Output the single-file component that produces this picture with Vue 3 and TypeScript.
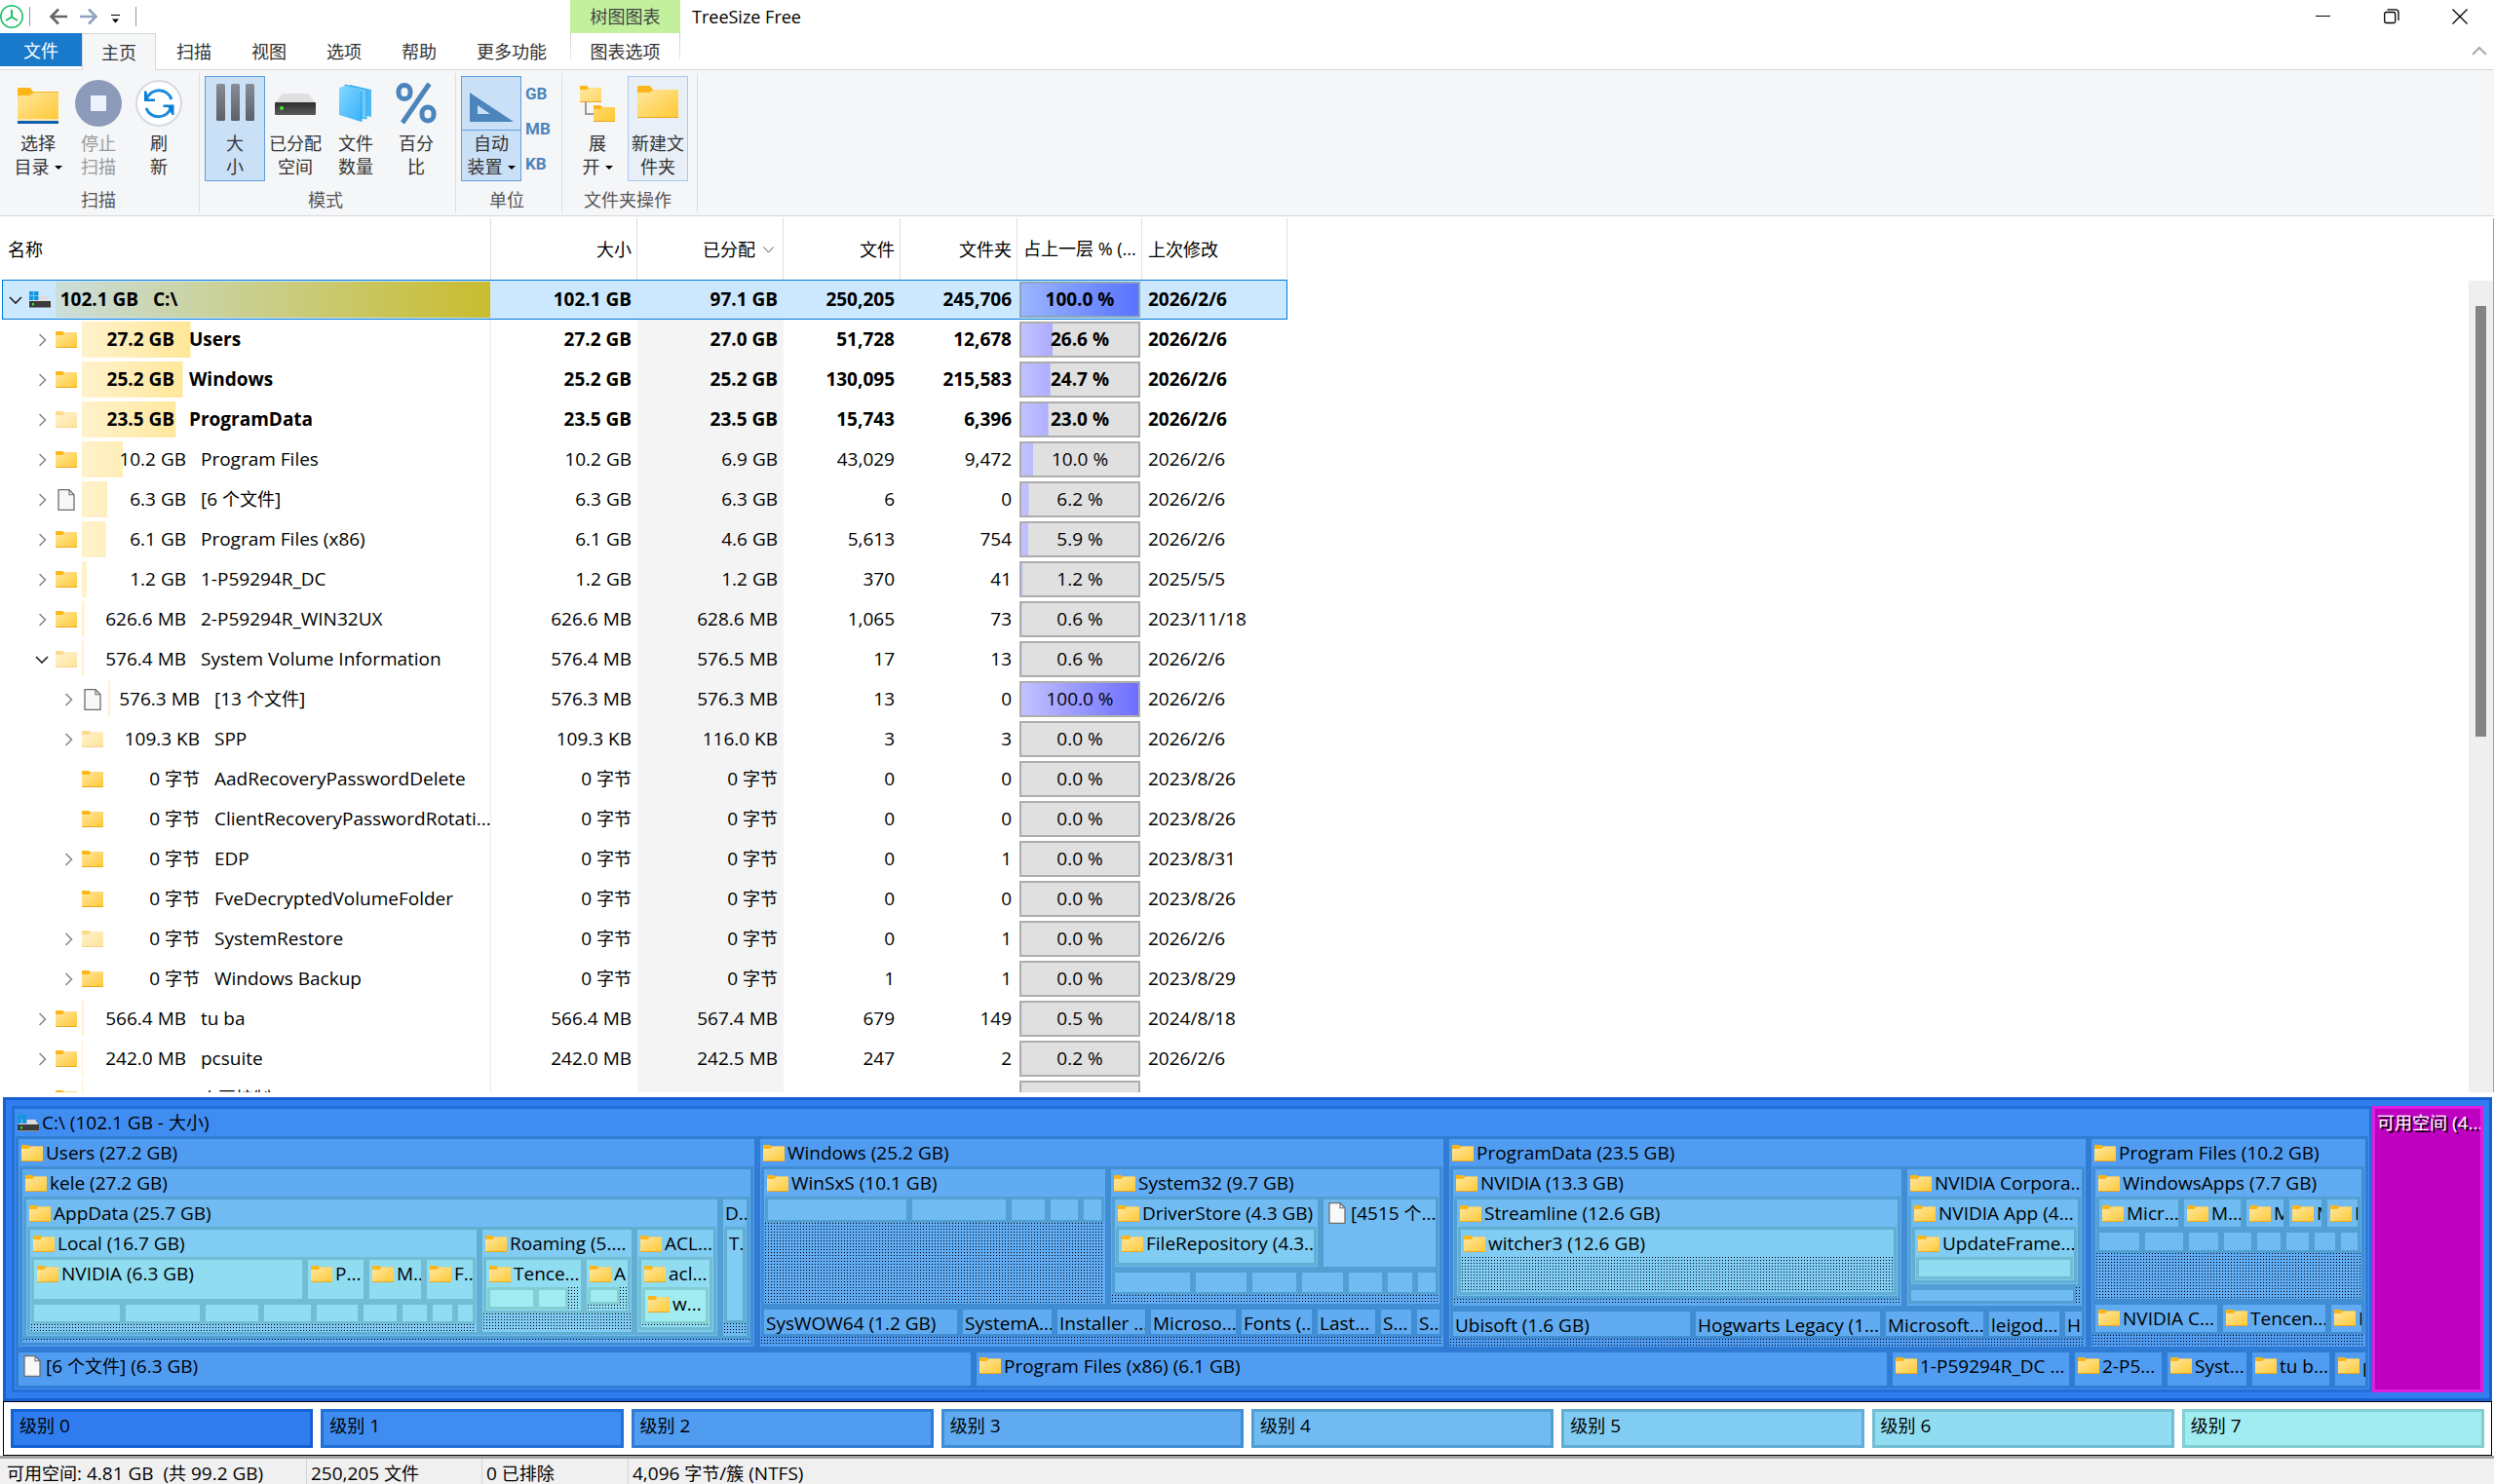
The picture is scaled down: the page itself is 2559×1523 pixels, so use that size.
<script setup lang="ts">
import { h, ref } from 'vue'

// Splits mixed text so that Chinese runs can use their own size.
const T = (props: { s: string }) =>
  h(
    'span',
    { class: 't' },
    props.s
      .split(/([\u3400-\u9fff]+)/)
      .filter((p) => p !== '')
      .map((p) => (/[\u3400-\u9fff]/.test(p) ? h('span', { class: 'zh' }, p) : p)),
  )
T.props = ['s']

type IconKind = 'folder' | 'faded' | 'file' | 'drive'

const Icon = (props: { kind: IconKind }) => {
  if (props.kind === 'file') {
    return h('svg', { class: 'ico file', viewBox: '0 0 22 22', 'aria-hidden': 'true' }, [
      h('path', { d: 'M3 .7h11l5 5v15.6H3z', fill: '#f8f8f8', stroke: '#6e6e6e', 'stroke-width': 1.3 }),
      h('path', { d: 'M14 .7v5h5', fill: 'none', stroke: '#6e6e6e', 'stroke-width': 1.1 }),
    ])
  }
  if (props.kind === 'drive') {
    return h('svg', { class: 'ico drive', viewBox: '0 0 22 17', 'aria-hidden': 'true' }, [
      h('path', { d: 'M4 5h14l4 6H0z', fill: '#dcdcdc' }),
      h('path', { d: 'M0 10h22v6.5H0z', fill: '#3b3b3b' }),
      h('path', { d: 'M0 16h22v1H0z', fill: '#8a8a8a' }),
      h('path', { d: 'M3 12h2v2.5H3z', fill: '#35e03a' }),
      h('path', { d: 'M0 0h4.4v4H0zM5 0h4.4v4H5zM0 4.6h4.4v4.4H0zM5 4.6h4.4v4.4H5z', fill: '#1396e2' }),
    ])
  }
  return h('svg', { class: ['ico', props.kind], viewBox: '0 0 22 17', 'aria-hidden': 'true' }, [
    h('path', { d: 'M0 .6Q0 0 .6 0H7l2 1.6H22V5H0z', fill: '#fcb61a' }),
    h('path', { d: 'M0 4h7.6L9.4 1.6H21.6Q22 1.6 22 2v14.4q0 .6-.6.6H.6Q0 17 0 16.4z', fill: 'url(#fold)' }),
    h('path', { d: 'M0 16h22q0 1-.6 1H.6Q0 17 0 16z', fill: '#eba71f' }),
  ])
}
Icon.props = ['kind']

/* ---------- ribbon ---------- */
const tabs = ['文件', '主页', '扫描', '视图', '选项', '帮助', '更多功能']
const activeTab = ref('主页')

/* ---------- directory table ---------- */
interface Row {
  d: number
  open?: boolean
  leaf?: boolean
  bold?: boolean
  icon: IconKind
  name: string
  size: string
  alloc: string
  files: string
  dirs: string
  pct: number
  bar: number
  date: string
}
const r = (
  d: number, mark: string, icon: IconKind, name: string, size: string, alloc: string,
  files: string, dirs: string, pct: number, bar: number, date: string,
): Row => ({
  d, icon, name, size, alloc, files, dirs, pct, bar, date,
  open: mark.includes('v'), leaf: mark.includes('-'), bold: mark.includes('b'),
})
const rows: Row[] = [
  r(0, 'vb', 'drive', 'C:\\', '102.1 GB', '97.1 GB', '250,205', '245,706', 100, 100, '2026/2/6'),
  r(1, 'b', 'folder', 'Users', '27.2 GB', '27.0 GB', '51,728', '12,678', 26.6, 26.6, '2026/2/6'),
  r(1, 'b', 'folder', 'Windows', '25.2 GB', '25.2 GB', '130,095', '215,583', 24.7, 24.7, '2026/2/6'),
  r(1, 'b', 'faded', 'ProgramData', '23.5 GB', '23.5 GB', '15,743', '6,396', 23.0, 23.0, '2026/2/6'),
  r(1, '', 'folder', 'Program Files', '10.2 GB', '6.9 GB', '43,029', '9,472', 10.0, 10.0, '2026/2/6'),
  r(1, '', 'file', '[6 个文件]', '6.3 GB', '6.3 GB', '6', '0', 6.2, 6.2, '2026/2/6'),
  r(1, '', 'folder', 'Program Files (x86)', '6.1 GB', '4.6 GB', '5,613', '754', 5.9, 5.9, '2026/2/6'),
  r(1, '', 'folder', '1-P59294R_DC', '1.2 GB', '1.2 GB', '370', '41', 1.2, 1.2, '2025/5/5'),
  r(1, '', 'folder', '2-P59294R_WIN32UX', '626.6 MB', '628.6 MB', '1,065', '73', 0.6, 0.6, '2023/11/18'),
  r(1, 'v', 'faded', 'System Volume Information', '576.4 MB', '576.5 MB', '17', '13', 0.6, 0.5, '2026/2/6'),
  r(2, '', 'file', '[13 个文件]', '576.3 MB', '576.3 MB', '13', '0', 100, 0.5, '2026/2/6'),
  r(2, '', 'faded', 'SPP', '109.3 KB', '116.0 KB', '3', '3', 0, 0, '2026/2/6'),
  r(2, '-', 'folder', 'AadRecoveryPasswordDelete', '0 字节', '0 字节', '0', '0', 0, 0, '2023/8/26'),
  r(2, '-', 'folder', 'ClientRecoveryPasswordRotati...', '0 字节', '0 字节', '0', '0', 0, 0, '2023/8/26'),
  r(2, '', 'folder', 'EDP', '0 字节', '0 字节', '0', '1', 0, 0, '2023/8/31'),
  r(2, '-', 'folder', 'FveDecryptedVolumeFolder', '0 字节', '0 字节', '0', '0', 0, 0, '2023/8/26'),
  r(2, '', 'faded', 'SystemRestore', '0 字节', '0 字节', '0', '1', 0, 0, '2026/2/6'),
  r(2, '', 'folder', 'Windows Backup', '0 字节', '0 字节', '1', '1', 0, 0, '2023/8/29'),
  r(1, '', 'folder', 'tu ba', '566.4 MB', '567.4 MB', '679', '149', 0.5, 0.5, '2024/8/18'),
  r(1, '', 'folder', 'pcsuite', '242.0 MB', '242.5 MB', '247', '2', 0.2, 0.3, '2026/2/6'),
  r(1, '', 'folder', '火豆控制', '223.8 MB', '224.6 MB', '180', '51', 0.2, 0.3, '2023/8/27'),
]

/* ---------- treemap ---------- */
interface Tile {
  w: number
  label?: string
  icon?: IconKind
  dots?: boolean
  rows?: Band[]
}
interface Band {
  h: number
  t: Tile[]
}
const box = (...ws: number[]): Tile[] => ws.map((w) => ({ w }))
const dots = (w = 1): Tile => ({ w, dots: true })
const band = (hh: number, ...t: Tile[]): Band => ({ h: hh, t })
const dir = (w: number, label: string, ...bands: Band[]): Tile => ({ w, label, icon: 'folder', rows: bands })
const txt = (w: number, label: string, ...bands: Band[]): Tile => ({ w, label, rows: bands })
const fil = (w: number, label: string): Tile => ({ w, label, icon: 'file' })

const users = dir(761, 'Users (27.2 GB)', band(183, dir(1, 'kele (27.2 GB)',
  band(145,
    dir(715, 'AppData (25.7 GB)', band(110,
      dir(464, 'Local (16.7 GB)',
        band(46, dir(281, 'NVIDIA (6.3 GB)'), dir(63, 'P...'), dir(59, 'M...'), dir(53, 'F...')),
        band(22, ...box(94, 82, 60, 54, 48, 40, 31, 26, 21)),
        band(7, dots())),
      dir(159, 'Roaming (5....',
        band(57,
          dir(103, 'Tence...', band(22, ...box(50, 33), dots(12))),
          dir(48, 'A', band(18, ...box(32), dots(7)), band(4, dots()))),
        band(18, dots())),
      dir(84, 'ACL...', band(74, dir(1, 'acl...', band(37, dir(1, 'w...')), band(2, dots()))), band(1)),
    )),
    txt(30, 'D...', band(98, txt(1, 'T.')), band(12, dots()))),
  band(3, dots()),
)))

const windows = dir(707, 'Windows (25.2 GB)',
  band(143,
    dir(356, 'WinSxS (10.1 GB)', band(27, ...box(148, 102, 40, 34, 24)), band(81, dots())),
    dir(343, 'System32 (9.7 GB)',
      band(75, dir(214, 'DriverStore (4.3 GB)', band(40, dir(1, 'FileRepository (4.3...'))), fil(121, '[4515 个...')),
      band(25, ...box(83, 58, 51, 48, 40, 31, 24)),
      band(8, dots()))),
  band(31, txt(204, 'SysWOW64 (1.2 GB)'), txt(97, 'SystemA...'), txt(96, 'Installer ...'), txt(93, 'Microso...'),
    txt(78, 'Fonts (...'), txt(65, 'Last...'), txt(37, 'S...'), txt(29, 'S...')),
  band(9, dots()))

const programData = dir(659, 'ProgramData (23.5 GB)',
  band(145,
    dir(466, 'NVIDIA (13.3 GB)',
      band(104, dir(1, 'Streamline (12.6 GB)', band(69, dir(1, 'witcher3 (12.6 GB)', band(34, dots()))))),
      band(6, dots())),
    dir(185, 'NVIDIA Corpora...',
      band(92, dir(1, 'NVIDIA App (4...', band(57, dir(1, 'UpdateFrame...', band(22, ...box(1)))))),
      band(17, ...box(172), dots(5)),
      band(1))),
  band(31, txt(249, 'Ubisoft (1.6 GB)'), txt(195, 'Hogwarts Legacy (1....'), txt(106, 'Microsoft...'), txt(78, 'leigod...'), txt(23, 'H')),
  band(7, dots()))

const programFiles = dir(287, 'Program Files (10.2 GB)',
  band(138, dir(1, 'WindowsApps (7.7 GB)',
    band(34, dir(87, 'Micr...'), dir(64, 'M...'), dir(44, 'M'), dir(39, 'M'), dir(37, 'I')),
    band(24, ...box(47, 45, 36, 34, 30, 29, 27, 23)),
    band(45, dots()))),
  band(34, dir(131, 'NVIDIA C...'), dir(111, 'Tencen...'), dir(37, 'I')),
  band(11, dots()))

const drive: Tile = {
  w: 2422,
  label: 'C:\\ (102.1 GB - 大小)',
  icon: 'drive',
  rows: [
    band(218, users, windows, programData, programFiles),
    band(40, fil(983, '[6 个文件] (6.3 GB)'), dir(940, 'Program Files (x86) (6.1 GB)'), dir(187, '1-P59294R_DC ...'),
      dir(95, '2-P5...'), dir(87, 'Syst...'), dir(85, 'tu b...'), dir(37, 'p')),
  ],
}

const tracks = (ns: number[]) => ns.map((n) => `minmax(0, ${n}fr)`).join(' ')

function renderTile(tile: Tile, level: number): any {
  if (tile.dots) return h('div', { class: ['dots', `lv${level - 1}`] })
  const kids = []
  if (tile.label) {
    kids.push(h('div', { class: ['cap', { plain: !tile.icon }] }, [
      tile.icon ? h(Icon, { kind: tile.icon }) : null,
      h(T, { s: tile.label }),
    ]))
  }
  if (tile.rows && tile.rows.length) {
    kids.push(h('div', { class: 'bands', style: { gridTemplateRows: tracks(tile.rows.map((b) => b.h)) } },
      tile.rows.map((b) => h('div', { class: 'band', style: { gridTemplateColumns: tracks(b.t.map((x) => x.w)) } },
        b.t.map((x) => renderTile(x, level + 1))))))
  }
  return h('div', { class: ['tile', `lv${level}`] }, kids)
}
const Treemap = () => renderTile(drive, 1)
</script>

<template>
  <div class="app">
    <svg class="defs" width="0" height="0" aria-hidden="true">
      <defs>
        <linearGradient id="fold" x1="0" y1="0" x2="1" y2="1"><stop offset="0" stop-color="#ffe7a0" /><stop offset="1" stop-color="#ffc935" /></linearGradient>
        <linearGradient id="gray" x1="0" y1="0" x2="0" y2="1"><stop offset="0" stop-color="#888c96" /><stop offset="1" stop-color="#5c6068" /></linearGradient>
        <linearGradient id="cyan" x1="0" y1="0" x2="1" y2="1"><stop offset="0" stop-color="#86d8ff" /><stop offset="1" stop-color="#36b0fa" /></linearGradient>
        <linearGradient id="box" x1="0" y1="0" x2="0" y2="1"><stop offset="0" stop-color="#2e2e2e" /><stop offset="1" stop-color="#5a5a5a" /></linearGradient>
      </defs>
    </svg>

    <header class="top">
      <div class="left">
        <div class="quick">
          <svg class="logo" viewBox="0 0 24 24" aria-hidden="true"><circle cx="12" cy="12" r="11.2" fill="#fff" stroke="#17bf63" stroke-width="1.5" /><path d="M12 5v8M12 12.5l-6 3.5M12 12.5l6 3.5" stroke="#17bf63" stroke-width="2" fill="none" /></svg>
          <i class="bar"></i>
          <button class="qb" aria-label="后退"><svg width="20" height="18" viewBox="0 0 20 18"><path d="M10 1.5 2.500 9l7.500 7.500M2 9h17" fill="none" stroke="#666" stroke-width="2.600" /></svg></button>
          <button class="qb" aria-label="前进"><svg width="20" height="18" viewBox="0 0 20 18"><path d="M10 1.500 17.500 9 10 16.500M18 9H1" fill="none" stroke="#8fa3c2" stroke-width="2.600" /></svg></button>
          <button class="qb small" aria-label="自定义"><svg width="9" height="9" viewBox="0 0 9 9"><path d="M0 0h9v1H0zM1 4.500h7L4.500 8.500z" /></svg></button>
          <i class="bar"></i>
        </div>
        <nav class="tabs">
          <button v-for="t in tabs" :key="t" :class="['tab', { file: t === '文件', on: t === activeTab }]" @click="activeTab = t">{{ t }}</button>
        </nav>
      </div>
      <div class="context">
        <div class="ctx-head">树图图表</div>
        <button class="tab ctx-tab">图表选项</button>
      </div>
      <h1 class="title">TreeSize Free</h1>
      <div class="win">
        <div class="wbtns">
          <button aria-label="最小化"><svg width="16" height="16" viewBox="0 0 16 16"><path d="M0 7.500h15" stroke="#000" /></svg></button>
          <button aria-label="还原"><svg width="16" height="16" viewBox="0 0 16 16" fill="none" stroke="#000" stroke-width="1.300"><rect x=".7" y="3.500" width="11" height="11" rx="1.500" /><path d="M3.500 .8h8.500q3 0 3 3V12" /></svg></button>
          <button aria-label="关闭"><svg width="16" height="16" viewBox="0 0 16 16"><path d="m.5.5 15 15M15.500.5l-15 15" stroke="#000" stroke-width="1.300" /></svg></button>
        </div>
        <button class="fold-btn" aria-label="折叠功能区"><svg width="16" height="10" viewBox="0 0 16 10"><path d="m1 9 7-7 7 7" fill="none" stroke="#aaa" stroke-width="2" /></svg></button>
      </div>
    </header>

    <section class="ribbon">
      <div class="group first">
        <div class="btns">
          <button class="big">
            <svg viewBox="0 0 48 48"><path d="M3 8h13l3 4h26v6H3z" fill="#fcb61a" /><path d="M3 18q0-2 2-2h10l5-3h25v28H3z" fill="url(#fold)" /><path d="M3 40h42v2H3z" fill="#fce9b4" /><path d="M3 42h42v3H3z" fill="#0a5fae" /></svg>
            <span>选择</span><span>目录<i class="caret"></i></span>
          </button>
          <button class="big off" disabled>
            <svg viewBox="0 0 48 48"><circle cx="24" cy="24" r="24" fill="#8b9bb9" /><rect x="16" y="16" width="16" height="16" rx="1" fill="#edf3fe" /></svg>
            <span>停止</span><span>扫描</span>
          </button>
          <button class="big">
            <svg viewBox="0 0 48 48"><circle cx="24" cy="24" r="23" fill="#fff" stroke="#d5d9e3" stroke-width="2" /><path d="M11.500 19.500A13.500 13.500 0 0 1 37 20M36.500 28.500A13.500 13.500 0 0 1 11 29" fill="none" stroke="#1a8bdc" stroke-width="3" /><path d="M9 11.500v10.500h11v-2.500h-7.500l-1-8zM39.500 36V25.500H28.500V28h5l4 8z" fill="#0a7fd6" /></svg>
            <span>刷</span><span>新</span>
          </button>
        </div>
        <div class="cap-g">扫描</div>
      </div>
      <div class="group">
        <div class="btns">
          <button class="big sel">
            <svg viewBox="0 0 48 48"><g fill="url(#gray)"><rect x="5" y="4" width="9" height="38" rx="1.500" /><rect x="20" y="4" width="9" height="38" rx="1.500" /><rect x="35" y="4" width="9" height="38" rx="1.500" /></g></svg>
            <span>大</span><span>小</span>
          </button>
          <button class="big">
            <svg viewBox="0 0 48 48"><path d="M11 14h26l8 10H3z" fill="#dfdfe1" /><rect x="3" y="23" width="42" height="13" rx="1" fill="url(#box)" /><circle cx="10" cy="29" r="2" fill="#3ee83a" /></svg>
            <span>已分配</span><span>空间</span>
          </button>
          <button class="big">
            <svg viewBox="0 0 48 48"><path d="m18 5 22 5v28l-22-5z" fill="#4db9f7" /><path d="m13 5 22 5v30l-22-5z" fill="#6accfb" stroke="#3aa8ec" /><path d="M7 8 13 6l17 5v32L7 36z" fill="url(#cyan)" /><path d="M30 12v31" stroke="#2f9fe6" /></svg>
            <span>文件</span><span>数量</span>
          </button>
          <button class="big">
            <svg viewBox="0 0 48 48" fill="none" stroke="#4c84bc" stroke-width="5"><rect x="6" y="5.500" width="12" height="14" rx="6" /><rect x="30" y="28" width="12" height="14" rx="6" /><path d="M37.500 4 10 44" /></svg>
            <span>百分</span><span>比</span>
          </button>
        </div>
        <div class="cap-g">模式</div>
      </div>
      <div class="group">
        <div class="btns">
          <button class="big sel split">
            <svg viewBox="0 0 48 48"><path d="M2 13v30h45zm8 13 13 9H10z" fill="#4c84bc" fill-rule="evenodd" /></svg>
            <span>自动</span><span>装置<i class="caret"></i></span>
          </button>
          <div class="units"><button>GB</button><button>MB</button><button>KB</button></div>
        </div>
        <div class="cap-g">单位</div>
      </div>
      <div class="group">
        <div class="btns">
          <button class="big">
            <svg viewBox="0 0 48 48"><path d="M12 22v13h9" fill="none" stroke="#9a9a9a" stroke-width="2" /><path d="M6 6h7l2 2h13v4H6zM20 26h7l2 2h13v4H20z" fill="#fcb61a" /><path d="M6 10h7l2-2h13v15H6zM20 30h7l2-2h13v15H20z" fill="url(#fold)" /><path d="M6 22h22v1H6zM20 42h22v1H20z" fill="#eba71f" /></svg>
            <span>展</span><span>开<i class="caret"></i></span>
          </button>
          <button class="big hov">
            <svg viewBox="0 0 48 48"><path d="M3 7q0-1 1-1h12l3 4h26v6H3z" fill="#fcb61a" /><path d="M3 15q0-2 2-2h10l5-3h24q1 0 1 1v27q0 1-1 1H4q-1 0-1-1z" fill="url(#fold)" /><path d="M3 38h42q0 1-1 1H4q-1 0-1-1z" fill="#eba71f" /></svg>
            <span>新建文</span><span>件夹</span>
          </button>
        </div>
        <div class="cap-g">文件夹操作</div>
      </div>
    </section>

    <main class="list">
      <div class="table-wrap">
        <table>
          <colgroup><col class="c-name" /><col class="c-wide" /><col class="c-wide" /><col class="c-num" /><col class="c-num" /><col class="c-pct" /><col class="c-date" /></colgroup>
          <thead>
            <tr>
              <th class="l">名称</th><th>大小</th>
              <th>已分配<svg class="sort" width="11" height="7" viewBox="0 0 11 7"><path d="m.5.5 5 5.500 5-5.500" fill="none" stroke="#555" /></svg></th>
              <th>文件</th><th>文件夹</th><th class="l"><T s="占上一层 % (..." /></th><th class="l">上次修改</th>
            </tr>
          </thead>
          <tbody>
            <tr v-for="row in rows" :key="row.name" :class="{ bold: row.bold, root: row.d === 0 }">
              <td class="name-td">
                <div :class="['name', 'd' + row.d]">
                  <button v-if="!row.leaf" class="exp" :aria-label="row.name">
                    <svg v-if="row.open" width="14" height="14" viewBox="0 0 14 14"><path d="m1 4 6 6 6-6" fill="none" stroke="#222" stroke-width="1.600" /></svg>
                    <svg v-else width="14" height="14" viewBox="0 0 14 14"><path d="m4.500 1 6 6-6 6" fill="none" stroke="#888" stroke-width="1.600" /></svg>
                  </button>
                  <span v-else class="exp"></span>
                  <Icon :kind="row.icon" />
                  <div class="share">
                    <div class="fill" :style="{ clipPath: `inset(0 ${100 - row.bar}% 0 0)` }"></div>
                    <span class="sz"><T :s="row.size" /></span>
                    <span class="nm"><T :s="row.name" /></span>
                  </div>
                </div>
              </td>
              <td><T :s="row.size" /></td>
              <td class="sorted"><T :s="row.alloc" /></td>
              <td>{{ row.files }}</td>
              <td>{{ row.dirs }}</td>
              <td class="pct-td">
                <div class="pct">
                  <div class="fill" :style="{ clipPath: `inset(0 ${100 - row.pct}% 0 0)` }"></div>
                  <span>{{ row.pct.toFixed(1) }} %</span>
                </div>
              </td>
              <td class="l">{{ row.date }}</td>
            </tr>
          </tbody>
        </table>
      </div>
      <div class="scroll"><div class="thumb"></div></div>
    </main>

    <section class="map">
      <Treemap />
      <div class="free"><T s="可用空间 (4..." /></div>
    </section>

    <section class="legend">
      <div v-for="n in 8" :key="n" :class="['lv' + (n - 1)]"><T :s="'级别 ' + (n - 1)" /></div>
    </section>

    <footer class="status">
      <span class="s1"><T s="可用空间: 4.81 GB  (共 99.2 GB)" /></span>
      <span class="s2"><T s="250,205 文件" /></span>
      <span class="s3"><T s="0 已排除" /></span>
      <span><T s="4,096 字节/簇 (NTFS)" /></span>
    </footer>
  </div>
</template>

<style>
body { background: #fff; }
.t { white-space: pre; }
.zh { font-size: 18px; line-height: 1; font-family: "Noto Sans CJK SC", sans-serif; font-weight: 400; }
.ico { width: 22px; height: 17px; flex: none; display: block; }
.ico.file { height: 22px; }
.ico.faded { opacity: .5; }

.lv0 { --f: #307df0; --b: #1560d2; }
.lv1 { --f: #408df2; --b: #226fd6; }
.lv2 { --f: #509cf1; --b: #307cd4; }
.lv3 { --f: #60abf1; --b: #408dd4; }
.lv4 { --f: #70bbf1; --b: #529fd3; }
.lv5 { --f: #80ccf2; --b: #62aed3; }
.lv6 { --f: #90dcf1; --b: #72bdd3; }
.lv7 { --f: #a0ecf0; --b: #82ced2; }

.tile {
  box-sizing: border-box;
  min-width: 0;
  min-height: 0;
  display: flex;
  flex-direction: column;
  overflow: hidden;
  background: var(--f);
  border: 3px solid var(--b);
}
.cap {
  height: 28px;
  flex: none;
  display: flex;
  align-items: center;
  gap: 3px;
  padding-left: 3px;
  overflow: hidden;
  line-height: 28px;
}
.cap.plain { padding-left: 2px; }
.bands { flex: 1; min-height: 0; display: grid; margin: 0 1px 1px; }
.band { display: grid; min-height: 0; }
.dots {
  background-color: var(--f);
  background-image: conic-gradient(from 270deg at 1px 1px, #001 90deg, transparent 0);
  background-size: 3px 3px;
}
</style>

<style scoped>
.app {
  height: 100vh;
  display: flex;
  flex-direction: column;
  overflow: hidden;
  font: 19px/28px "Open Sans", "Noto Sans CJK SC", sans-serif;
  color: #000;
}
button {
  border: 0;
  padding: 0;
  margin: 0;
  background: none;
  font: inherit;
  color: inherit;
}
.defs { position: absolute; }

.top { display: flex; flex: none; height: 71px; border-bottom: 1px solid #d5d8da; }
.quick { height: 34px; display: flex; align-items: center; }
.logo { width: 24px; height: 24px; margin-right: 6px; }
.bar { width: 1px; height: 20px; background: #999; }
.qb { display: flex; margin-left: 11px; }
.bar + .qb { margin-left: 19px; }
.qb.small { margin: 5px 16px 0 13px; }
.tabs { display: flex; gap: 1px; height: 38px; }
.tab {
  box-sizing: border-box;
  height: 38px;
  padding: 0 20px 2px;
  font: 400 18px/36px "Noto Sans CJK SC", sans-serif;
  color: #333;
}
.tab.file { height: 34px; padding: 0 24px; line-height: 34px; background: #1979ca; color: #fff; margin-right: -1px; }
.tab.on { padding: 0 19px 2px; border: 1px solid #d5d8da; border-bottom: 0; background: #f5f6f8; line-height: 34px; }
.context { margin-left: 4px; width: 113px; font: 400 18px/34px "Noto Sans CJK SC", sans-serif; text-align: center; }
.ctx-head { height: 34px; line-height: 32px; background: #c2f09c; color: #444; }
.ctx-tab {
  width: 113px;
  height: 28px;
  padding: 0;
  border: 1px solid;
  border-width: 0 1px;
  border-image: linear-gradient(#ccc, #eee) 1;
}
.title { margin: 0 0 0 12px; font-weight: 400; font-size: 18px; line-height: 34px; }
.win { margin-left: auto; display: flex; flex-direction: column; align-items: flex-end; }
.wbtns { display: flex; height: 34px; align-items: center; gap: 54px; padding-right: 27px; }
.wbtns button, .fold-btn { display: flex; }
.fold-btn { margin: 13px 7px 0 0; }

.ribbon {
  flex: none;
  height: 149px;
  display: flex;
  background: #f5f6f8;
  border-bottom: 1px solid #d5d8da;
  font: 400 18px/24px "Noto Sans CJK SC", sans-serif;
  color: #333;
}
.group { margin: 3px 0; padding: 3px 9px 0 5px; border-right: 1px solid #dcdee1; }
.group.first { padding: 3px 10px 0 8px; }
.btns { display: flex; height: 108px; }
.big {
  box-sizing: border-box;
  width: 62px;
  height: 108px;
  border: 1px solid transparent;
  display: flex;
  flex-direction: column;
  align-items: center;
  white-space: nowrap;
}
.big svg { width: 48px; height: 48px; margin: 3px 0 4px; }
.big.off { color: #999; }
.big.sel { background: #cae0f7; border-color: #5c9fe0; }
.big.hov { background: #e8eff7; border-color: #a6cbf3; }
.big.split { background: linear-gradient(#5c9fe0, #5c9fe0) 0 54px / 100% 1px no-repeat #cae0f7; }
.caret { display: inline-block; border: 4px solid transparent; border-top-color: #000; border-bottom: 0; margin: 0 0 4px 5px; }
.units { display: flex; flex-direction: column; justify-content: space-around; align-items: flex-start; margin-left: 4px; width: 28px; font: 700 17px/24px Roboto, sans-serif; color: #4c84bc; }
.units button { height: 24px; }
.cap-g { text-align: center; line-height: 36px; color: #555; }

.list { flex: 1; min-height: 0; display: flex; margin: 2px 0 5px; border-right: 1px solid #a0a0a0; }
.table-wrap { flex: 1; overflow: hidden; }
table { border-collapse: separate; border-spacing: 0; table-layout: fixed; width: 1319px; margin-left: 2px; }
.c-name { width: 502px; }
.c-wide { width: 150px; }
.c-num { width: 120px; }
.c-pct { width: 128px; }
.c-date { width: 149px; }
th {
  height: 61px;
  padding: 0 5px 2px 0;
  text-align: right;
  font: 400 18px/28px "Noto Sans CJK SC", sans-serif;
  border-right: 1px solid #dedede;
  white-space: nowrap;
}
th .t { font-family: "Open Sans", sans-serif; }
th.l { text-align: left; padding-left: 6px; }
.sort { margin: 0 4px 3px 8px; }
td { height: 41px; padding: 0 6px 0 0; text-align: right; white-space: nowrap; line-height: 37px; }
td.l { text-align: left; padding-left: 6px; }
.bold { font-weight: 700; }
.sorted { background: #f4f4f4; }
.name-td { padding: 0; border-right: 1px solid #ececec; }
.root td { background: #cce8ff; border-color: #cce8ff; }
.root { outline: 1px solid #0078d7; outline-offset: -1px; }
.name { display: flex; align-items: center; padding-left: 7px; }
.d1 { margin-left: 27px; }
.d2 { margin-left: 54px; }
.exp { width: 14px; margin-right: 7px; display: flex; flex: none; }
.share { position: relative; flex: 1; height: 37px; margin-left: 5px; display: flex; }
.fill { position: absolute; inset: 0; background: linear-gradient(90deg, #fff2cc, #ffe797 27%, #ffce2e); }
.root .name .fill { background: linear-gradient(90deg, #cbdedb, #c9bc2e); }
.share span { position: relative; }
.sz { width: 107px; text-align: right; margin-right: 15px; flex: none; }
.d2 .sz { width: 94px; }
.bold .sz { width: 95px; }
.root .sz { width: 85px; }
.pct-td { padding: 0 2px; }
.pct { position: relative; box-sizing: border-box; height: 37px; border: 2px solid #adadad; background: #e0e0e0; text-align: center; line-height: 33px; }
.pct .fill { background: linear-gradient(90deg, #c2c2ff, #6e6eff); }
.pct span { position: relative; }
.root .pct { border-color: #8aa6bd; }
.root .pct .fill { background: linear-gradient(90deg, #9bb5ff, #5873ff); }
.scroll { width: 25px; margin-top: 64px; background: #efefef; }
.thumb { width: 11px; height: 442px; margin: 26px 0 0 7px; background: #858585; }

.map {
  flex: none;
  height: 312px;
  box-sizing: border-box;
  margin: 0 2px 0 3px;
  padding: 6px;
  display: grid;
  grid-template-columns: minmax(0, 2422fr) minmax(0, 114fr);
  background: #307df0;
  border: 3px solid #1560d2;
}
.free {
  background: #c000c0;
  border: 3px solid #e01ce0;
  padding-left: 2px;
  color: #fff;
  text-shadow: 2px 2px 0 #000;
  overflow: hidden;
  white-space: nowrap;
}
.legend {
  flex: none;
  height: 56px;
  box-sizing: border-box;
  margin: 0 2px 0 3px;
  border: 1px solid #000;
  padding: 7px;
  display: grid;
  grid-template-columns: repeat(8, minmax(0, 1fr));
  gap: 8px;
}
.legend div { background: var(--f); border: 3px solid var(--b); padding-left: 6px; height: 34px; }
.status {
  flex: none;
  box-sizing: border-box;
  height: 29px;
  border-top: 3px solid #a3a3a3;
  background: #f0f0f0;
  display: flex;
  line-height: 30px;
  overflow: hidden;
}
.status > span { box-sizing: border-box; padding-left: 4px; }
.status .s1 { width: 315px; padding-left: 7px; }
.status .s2 { width: 180px; }
.status .s3 { width: 150px; }
.s1, .s2, .s3 { border-right: 1px solid #d5d5d5; }
</style>
